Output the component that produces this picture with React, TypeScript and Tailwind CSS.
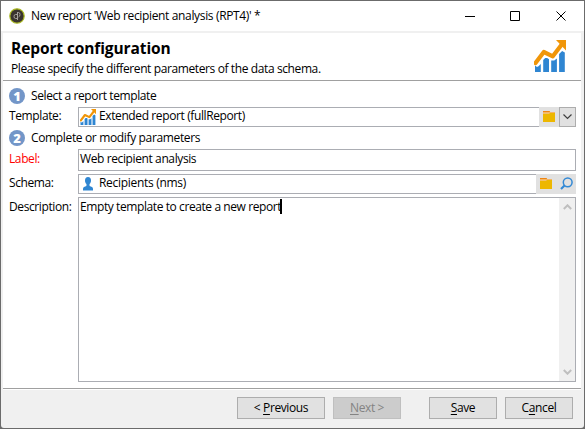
import type { ReactNode } from "react";

function ChartIcon({ size }: { size: number }) {
  return (
    <svg width={size} height={size} viewBox="0 0 32 32" className="block shrink-0">
      <g fill="#2f86d2">
        <path d="M1 25.500l2 1.500 1.500-.7L6.800 24v8H1z" />
        <path d="M9.200 20l2-2h2l1.800 1.200V32H9.200z" />
        <path d="M17.200 20.500h3l2.700-2V32h-5.700z" />
        <path d="M25.100 14l3-3 2.700 1.500V32h-5.700z" />
      </g>
      <path d="M1.500 23L9.800 12l9 4.300L28.500 3.500" fill="none" stroke="#f09609" strokeWidth="4.200" strokeLinejoin="round" strokeLinecap="round" />
      <path d="M22 0h10v10.500z" fill="#f09609" />
    </svg>
  );
}

function FolderIcon() {
  return (
    <svg width="12" height="11" viewBox="0 0 12 11" className="block shrink-0">
      <path d="M0 0h6.500l.8 1H12v1H0z" fill="#f5b566" />
      <path d="M0 0h6.500l.5 1H0z" fill="#ee8512" />
      <path d="M0 2h12v1H0z" fill="#f3c06a" />
      <path d="M0 3h6l1-1h5v9H0z" fill="#edb700" />
    </svg>
  );
}

function PersonIcon() {
  return (
    <svg width="10" height="14" viewBox="0 0 10 14" className="block shrink-0">
      <path d="M5 0C3 0 2 1.400 2 3.400c0 1.600.6 2.800 1.500 3.600L3.400 9 1 10Q0 10.500 0 12v1.500h10V12q0-1.500-1-2L6.600 9l-.1-2C7.400 6.200 8 5 8 3.400 8 1.400 7 0 5 0z" fill="#2f86d2" />
    </svg>
  );
}

function SearchIcon() {
  return (
    <svg width="13" height="13" viewBox="0 0 13 13" className="block shrink-0" fill="none" stroke="#3389d5">
      <circle cx="7.700" cy="5.300" r="4.400" strokeWidth="1.500" />
      <path d="M4.500 8.500L1 12" strokeWidth="2.200" />
    </svg>
  );
}

function StepHeading({ step, className, children }: { step: number; className: string; children: ReactNode }) {
  return (
    <div className={`flex items-center pl-[6px] ${className}`}>
      <span className="flex h-4 w-4 items-center justify-center rounded-full bg-[#7396c8] text-[13px] leading-4 font-extrabold tracking-normal text-white">{step}</span>
      <span className="ml-[6px]">{children}</span>
    </div>
  );
}

function DialogButton({ className, children }: { className: string; children: ReactNode }) {
  return (
    <button className={`flex h-[22px] items-center justify-center border pb-px ${className}`}>
      <span className="whitespace-pre">{children}</span>
    </button>
  );
}

function Key({ children }: { children: string }) {
  return <span className="underline decoration-1 underline-offset-2">{children}</span>;
}

export default function App() {
  return (
    <div className="h-[429px] w-[585px] overflow-hidden bg-[#6b6b6b] p-px font-['Open_Sans','Noto_Sans',sans-serif] text-[12px] leading-[16px] tracking-[-0.39px] whitespace-nowrap text-black">
      <div className="flex h-[427px] w-[583px] flex-col rounded-b-[3px] bg-[#f0f0f0]">
        <header className="flex h-[30px] shrink-0 items-center bg-white pl-[8px]">
          <svg width="16" height="16" viewBox="0 0 16 16" className="block">
            <circle cx="8" cy="8" r="7.200" fill="#3b342f" stroke="#a9b820" strokeWidth="1.200" />
            <path d="M8.500 12V4M8.500 6.500H6.500Q5 6.500 5 8.500t1.500 2h2M8.500 4.500h1q1.500 0 1.500 2T9.500 9" fill="none" stroke="#a5a19c" strokeWidth="1" />
          </svg>
          <span className="ml-[6px] pb-px tracking-[-0.35px]">New report 'Web recipient analysis (RPT4)' *</span>
          <svg width="103" height="12" viewBox="0 0 103 12" className="ml-auto mr-[16px] block" fill="none" stroke="#000">
            <path d="M0 6.500h10M45.500 1.500h9v9h-9z" />
            <path d="M91.500 1.500l9 9M100.500 1.500l-9 9" />
          </svg>
        </header>

        <div className="mx-[2px] mt-[2px] flex h-[48px] w-[578px] shrink-0 items-start justify-between border-b border-[#a0a0a0] bg-white pr-[15px] pl-[8px]">
          <div>
            <h1 className="mt-[5px] text-[15.500px] leading-[20px] font-bold tracking-[-0.1px]">Report configuration</h1>
            <p className="mt-[3px]">Please specify the different parameters of the data schema.</p>
          </div>
          <div className="mt-[7px]">
            <ChartIcon size={32} />
          </div>
        </div>

        <main className="ml-[2px] flex h-[307px] w-[578px] shrink-0 flex-col bg-white pt-[7px]">
          <StepHeading step={1} className="h-[16px]">Select a report template</StepHeading>
          <div className="mt-[3px] flex h-5 items-center pl-[6px]">
            <label className="w-[69px] pb-[2px]">Template:</label>
            <div className="flex h-5 w-[498px] border border-[#abadb3]">
              <div className="flex flex-1 items-center pl-px">
                <ChartIcon size={16} />
                <span className="ml-[3px] pb-[2px]">Extended report (fullReport)</span>
              </div>
              <div className="-my-px flex w-5 items-center justify-center bg-[#e1e1e1] pb-px"><FolderIcon /></div>
              <div className="-my-px -mr-px flex w-[17px] items-center justify-center border border-[#adadad] bg-[#e1e1e1]">
                <svg width="9" height="6" viewBox="0 0 9 6" fill="none" stroke="#404040" strokeWidth="1.200"><path d="M.5.5l4 4 4-4" /></svg>
              </div>
            </div>
          </div>
          <StepHeading step={2} className="mt-[3px] h-[16px] tracking-[-0.35px]">Complete or modify parameters</StepHeading>
          <div className="mt-[3px] flex h-[22px] items-center pl-[6px]">
            <label className="w-[69px] pb-[2px] text-[#ff0000]">Label:</label>
            <div className="flex h-[22px] w-[498px] items-center border border-[#abadb3] pb-[2px] pl-px">Web recipient analysis</div>
          </div>
          <div className="mt-[3px] flex h-5 items-center pl-[6px]">
            <label className="w-[69px] pb-[2px]">Schema:</label>
            <div className="flex h-5 w-[498px] border border-[#abadb3]">
              <div className="flex flex-1 items-center pl-[4px]">
                <PersonIcon />
                <span className="ml-[6px] pb-[2px] tracking-[-0.3px]">Recipients (nms)</span>
              </div>
              <div className="-my-px -mr-px flex w-10 items-center bg-[#e1e1e1] pb-px pl-[4px]">
                <FolderIcon />
                <div className="ml-[8px]"><SearchIcon /></div>
              </div>
            </div>
          </div>
          <div className="mt-[3px] flex items-start pl-[6px]">
            <label className="mt-[2px] w-[69px]">Description:</label>
            <div className="flex h-[185px] w-[498px] border border-[#abadb3]">
              <div className="flex flex-1 items-start pt-px pl-px">
                <span className="tracking-[-0.41px]">Empty template to create a new report</span>
                <span className="-ml-px h-[15px] w-[2px] bg-black" />
              </div>
              <div className="flex w-4 flex-col items-center justify-between bg-[#f0f0f0] py-[6px]">
                <svg width="9" height="6" viewBox="0 0 9 6" fill="none" stroke="#bfbfbf" strokeWidth="2"><path d="M.8 5l3.700-3.700L8.200 5" /></svg>
                <svg width="9" height="6" viewBox="0 0 9 6" fill="none" stroke="#bfbfbf" strokeWidth="2"><path d="M.8 1l3.700 3.700L8.200 1" /></svg>
              </div>
            </div>
          </div>
        </main>

        <footer className="ml-[2px] flex h-[40px] w-[578px] shrink-0 flex-col">
          <div className="h-px bg-[#a0a0a0]" />
          <div className="h-px bg-white" />
          <div className="flex pt-[7px] pl-[234px]">
            <DialogButton className="w-[88px] border-[#adadad] bg-[#e1e1e1]">{"< "}<Key>P</Key>revious</DialogButton>
            <DialogButton className="ml-[8px] w-[68px] border-[#bfbfbf] bg-[#cccccc] text-[#838383]"><Key>N</Key>{"ext >"}</DialogButton>
            <DialogButton className="ml-[28px] w-[68px] border-[#adadad] bg-[#e1e1e1]"><Key>S</Key>ave</DialogButton>
            <DialogButton className="ml-[8px] w-[68px] border-[#adadad] bg-[#e1e1e1]">C<Key>a</Key>ncel</DialogButton>
          </div>
        </footer>
      </div>
    </div>
  );
}
